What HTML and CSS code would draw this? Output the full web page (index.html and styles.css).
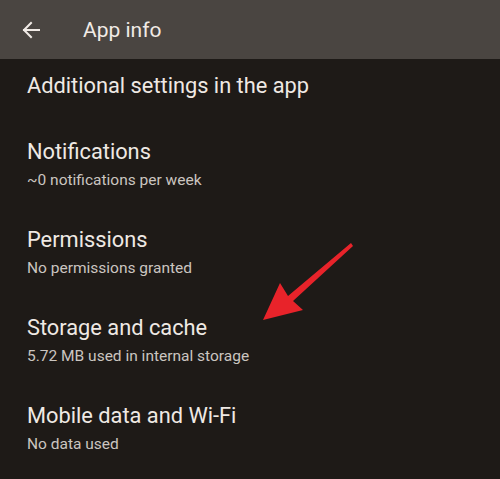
FILE: index.html
```html
<!DOCTYPE html>
<html>
<head>
<meta charset="utf-8">
<link rel="stylesheet" href="styles.css">
</head>
<body>
<div class="screen">
  <header class="appbar">
    <svg class="back" width="20" height="20" viewBox="0 0 20 20" aria-hidden="true">
      <path d="M18 10H3 M10 3 L3 10 L10 17" fill="none" stroke="#f1ebe6" stroke-width="2" stroke-linecap="square" stroke-linejoin="miter"/>
    </svg>
    <h1 class="appbar-title">App info</h1>
  </header>
  <ul class="list">
    <li class="item item-single"><div class="title">Additional settings in the app</div></li>
    <li class="item"><div class="title">Notifications</div><div class="sub">~0 notifications per week</div></li>
    <li class="item"><div class="title">Permissions</div><div class="sub">No permissions granted</div></li>
    <li class="item"><div class="title">Storage and cache</div><div class="sub">5.72 MB used in internal storage</div></li>
    <li class="item"><div class="title">Mobile data and Wi-Fi</div><div class="sub">No data used</div></li>
  </ul>
  <svg class="pointer" width="500" height="479" viewBox="0 0 500 479" aria-hidden="true">
    <polygon points="263,320 280,283 288,296 351,243 353,246 293,301 303,310" fill="#e8232a"/>
  </svg>
</div>
</body>
</html>
```

FILE: styles.css
```css
html, body {
  margin: 0;
  padding: 0;
  background: #1e1a17;
}
.screen {
  position: relative;
  width: 500px;
  height: 479px;
  overflow: hidden;
  background: #1e1a17;
  font-family: Roboto, "Open Sans", sans-serif;
}
.appbar {
  height: 59px;
  background: #4a4541;
  display: flex;
  align-items: center;
  padding-left: 21px;
  box-sizing: border-box;
}
.back {
  display: block;
  flex: none;
}
.appbar-title {
  margin: 0 0 0 42px;
  font-weight: 400;
  font-size: 21px;
  color: #f1ebe6;
  line-height: 28px;
}
.list {
  list-style: none;
  margin: 0;
  padding: 0;
}
.item {
  padding: 18px 27px;
}
.item-single {
  padding: 13px 27px 20px;
}
.title {
  font-size: 21.8px;
  line-height: 28px;
  color: #efe9e4;
}
.sub {
  font-size: 15.5px;
  line-height: 25px;
  padding-top: 2px;
  margin-bottom: -3px;
  color: #cbc5c0;
}
.pointer {
  position: absolute;
  left: 0;
  top: 0;
  pointer-events: none;
}
```
